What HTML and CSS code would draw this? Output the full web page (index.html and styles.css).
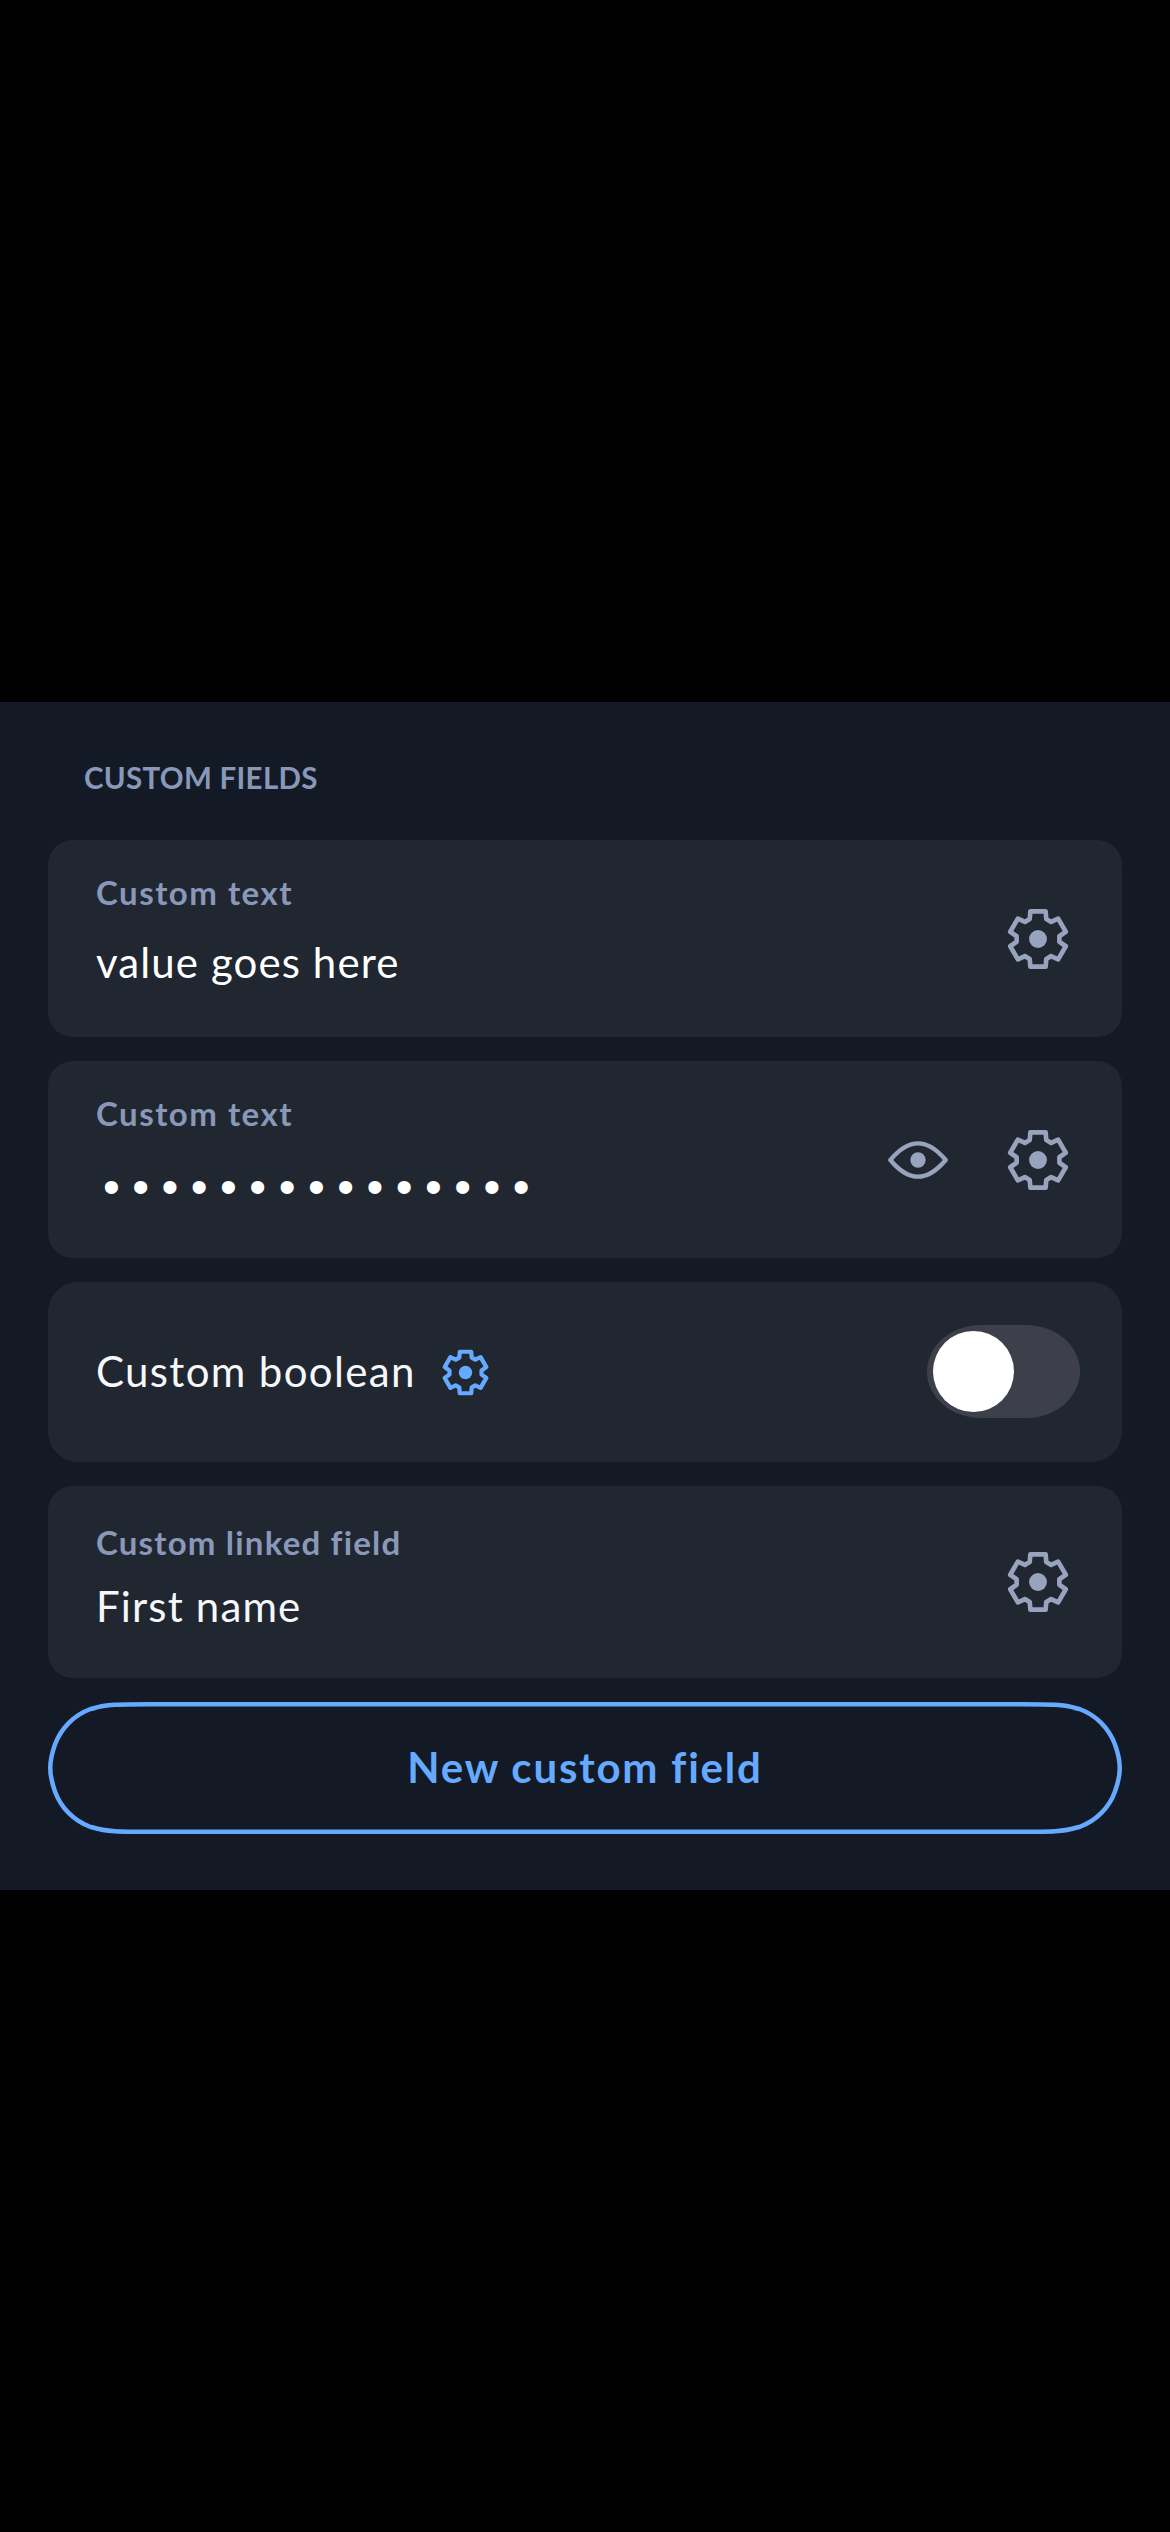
FILE: index.html
```html
<!DOCTYPE html>
<html lang="en">
<head>
<meta charset="utf-8">
<title>Custom fields</title>
<link rel="stylesheet" href="styles.css">
</head>
<body>
<svg class="defs" aria-hidden="true">
  <symbol id="gear" viewBox="-90.5 -90.5 181 181" overflow="visible">
    <path fill="none" stroke="currentColor" stroke-linejoin="round" d="M-25-60L-23-83.5H23L25-60L39.5-51.7L60.8-61.7L83.8-21.8L64.5-8.3V8.3L83.8 21.8L60.8 61.7L39.5 51.7L25 60L23 83.5H-23L-25 60L-39.5 51.7L-60.8 61.7L-83.8 21.8L-64.5 8.3V-8.3L-83.8-21.8L-60.8-61.7L-39.5-51.7Z"/>
    <circle r="27" fill="currentColor"/>
  </symbol>
</svg>
<main class="panel">
  <h2 class="heading">CUSTOM FIELDS</h2>
  <section class="card card-text">
    <div class="content">
      <div class="label">Custom text</div>
      <div class="value bright">value goes here</div>
    </div>
    <svg class="gear"><use href="#gear"/></svg>
  </section>
  <section class="card card-text">
    <div class="content">
      <div class="label">Custom text</div>
      <div class="dots">•••••••••••••••</div>
    </div>
    <svg class="eye" viewBox="-90 -57 180 114"><path fill="none" stroke="currentColor" stroke-width="13" stroke-linejoin="round" d="M-83 0C-58-30-32-50 0-50S58-30 83 0C58 30 32 50 0 50S-58 30-83 0Z"/><circle r="23" fill="currentColor"/></svg>
    <svg class="gear"><use href="#gear"/></svg>
  </section>
  <section class="card card-bool">
    <div class="value bool">Custom boolean</div>
    <svg class="gear gear-small"><use href="#gear"/></svg>
    <div class="toggle"><div class="knob"></div></div>
  </section>
  <section class="card card-linked">
    <div class="content">
      <div class="label linked">Custom linked field</div>
      <div class="value linked-value">First name</div>
    </div>
    <svg class="gear"><use href="#gear"/></svg>
  </section>
  <button class="new-field">
    <svg class="outline" viewBox="0 0 1074 132"><path d="M100 2.25H974C1002 2.25 1016 2.25 1029 6.5L1031.400 7C1047.900 13 1061 26 1067 42.600C1070 51 1071.750 58 1071.750 66S1070 81 1067 89.400C1061 106 1047.900 119 1031.400 125L1029 125.500C1016 129.750 1002 129.750 974 129.750H100C72 129.750 58 129.750 45 125.500L42.600 125C26.100 119 13 106 7 89.400C4 81 2.250 74 2.250 66S4 51 7 42.600C13 26 26.100 13 42.600 7L45 6.500C58 2.250 72 2.250 100 2.250Z"/></svg>
    New custom field
  </button>
</main>
</body>
</html>
```
FILE: styles.css
```css
* { box-sizing: border-box; }
body { margin: 0; padding-top: 702px; min-height: 2532px; background: #000; font-family: Lato, "Open Sans", sans-serif; color: #f5f7fa; }
.defs { position: absolute; width: 0; height: 0; }
.panel { height: 1188px; padding: 56px 48px 0; background: #131a26; display: flex; flex-direction: column; }
.heading { margin: 0 0 42px; padding-left: 36px; height: 40px; line-height: 40px; font-size: 29.5px; font-weight: 700; letter-spacing: 0.3px; color: #8998b8; }
.card { display: flex; background: #212731; border-radius: 27px; corner-shape: superellipse(1.15); padding: 0 54px 0 48px; margin-bottom: 24px; align-items: center; flex-shrink: 0; }
.card-text { height: 197px; }
.card-bool { height: 180px; padding-right: 42px; border-radius: 33px; }
.card-linked { height: 192px; }
.content { flex: 1; align-self: stretch; padding-top: 32px; }
.card-linked .content { padding-top: 36px; }
.label { height: 40px; line-height: 40px; font-size: 33px; font-weight: 700; letter-spacing: 1.5px; color: #8998b8; margin-bottom: 24px; white-space: nowrap; }
.linked { margin-bottom: 18px; letter-spacing: 1.2px; }
.value { height: 52px; line-height: 52px; font-size: 42px; letter-spacing: 1.1px; white-space: nowrap; }
.bright { color: #fff; }
.bool { letter-spacing: 1.35px; margin-bottom: 2px; }
.linked-value { letter-spacing: 1.15px; }
.dots { height: 60px; padding-left: 7px; line-height: 60px; font-size: 48px; color: #fff; font-family: "Liberation Sans", sans-serif; letter-spacing: 12.47px; white-space: nowrap; }
.gear { flex-shrink: 0; width: 60px; height: 60px; color: #98a4be; stroke-width: 14; overflow: visible; }
.eye { flex-shrink: 0; width: 60px; height: 38px; color: #98a4be; margin-right: 60px; margin-top: 1px; }
.gear-small { width: 45px; height: 45px; color: #65aaff; stroke-width: 17; margin-left: 27px; }
.toggle { margin-left: auto; margin-bottom: 1px; width: 153px; height: 93px; padding: 6px; border-radius: 54px / 46.5px; background: #3d404b; }
.knob { width: 81px; height: 81px; border-radius: 50%; background: #fff; }
.new-field { position: relative; flex-shrink: 0; height: 132px; padding: 0 0 2px; border: 0; background: none; color: #65aaff; font: 700 42px/52px Lato, sans-serif; letter-spacing: 1.8px; }
.outline { position: absolute; inset: 0; width: 1074px; height: 132px; fill: none; stroke: #65aaff; stroke-width: 4.5; }
```
